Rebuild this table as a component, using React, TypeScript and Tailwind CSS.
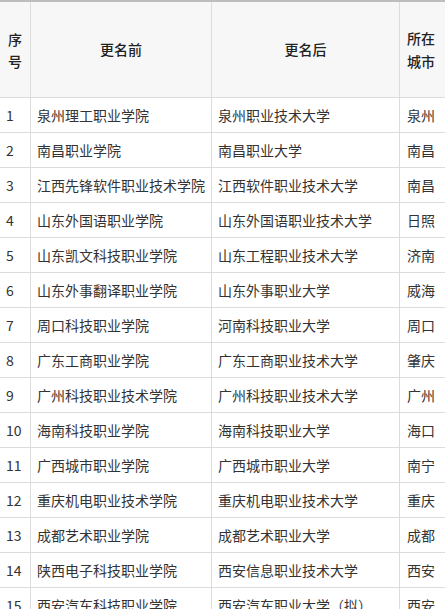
const ROWS: [string, string, string, string][] = [
  ["1", "泉州理工职业学院", "泉州职业技术大学", "泉州"],
  ["2", "南昌职业学院", "南昌职业大学", "南昌"],
  ["3", "江西先锋软件职业技术学院", "江西软件职业技术大学", "南昌"],
  ["4", "山东外国语职业学院", "山东外国语职业技术大学", "日照"],
  ["5", "山东凯文科技职业学院", "山东工程职业技术大学", "济南"],
  ["6", "山东外事翻译职业学院", "山东外事职业大学", "威海"],
  ["7", "周口科技职业学院", "河南科技职业大学", "周口"],
  ["8", "广东工商职业学院", "广东工商职业技术大学", "肇庆"],
  ["9", "广州科技职业技术学院", "广州科技职业技术大学", "广州"],
  ["10", "海南科技职业学院", "海南科技职业大学", "海口"],
  ["11", "广西城市职业学院", "广西城市职业大学", "南宁"],
  ["12", "重庆机电职业技术学院", "重庆机电职业技术大学", "重庆"],
  ["13", "成都艺术职业学院", "成都艺术职业大学", "成都"],
  ["14", "陕西电子科技职业学院", "西安信息职业技术大学", "西安"],
  ["15", "西安汽车科技职业学院", "西安汽车职业大学（拟）", "西安"],
];

const GRID = "grid grid-cols-[31px_181px_188px_60px]";
const CELL = "border-r border-b border-[#dcdcdc] whitespace-nowrap overflow-hidden";

export default function App() {
  return (
    <div
      className="w-[445px] h-[609px] overflow-hidden bg-white text-[14px] text-[#333]"
      style={{ fontFamily: '"Noto Sans CJK SC", "Noto Sans", sans-serif' }}
    >
      <div className="w-[460px] border-t-2 border-[#bdbdbd]">
        <div className={`${GRID} h-[96px] bg-[#f7f7f7] font-medium text-[#222]`}>
          <div className={`${CELL} flex items-center justify-center text-center leading-[22px] whitespace-normal`}>
            序<br />号
          </div>
          <div className={`${CELL} flex items-center justify-center`}>更名前</div>
          <div className={`${CELL} flex items-center justify-center`}>更名后</div>
          <div className={`${CELL} flex items-center pl-[7px] leading-[23px] whitespace-normal`}>
            所在<br />城市
          </div>
        </div>
        {ROWS.map(([no, before, after, city]) => (
          <div key={no} className={`${GRID} h-[35px]`}>
            <div className={`${CELL} flex items-center pl-[6px]`}>{no}</div>
            <div className={`${CELL} flex items-center pl-[6px]`}>{before}</div>
            <div className={`${CELL} flex items-center pl-[6px]`}>{after}</div>
            <div className={`${CELL} flex items-center pl-[7px]`}>{city}</div>
          </div>
        ))}
      </div>
    </div>
  );
}
